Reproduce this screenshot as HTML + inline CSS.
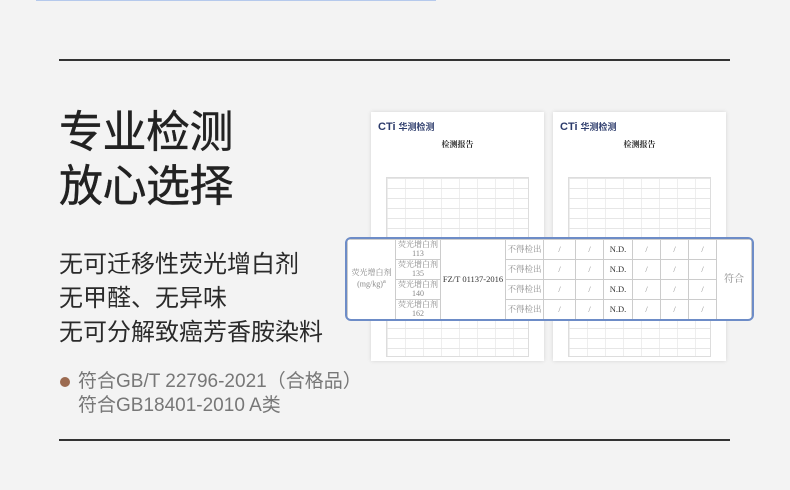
<!DOCTYPE html>
<html><head><meta charset="utf-8"><style>
*{margin:0;padding:0;box-sizing:border-box}
body{width:790px;height:490px;background:#f3f3f3;position:relative;overflow:hidden;font-family:"Liberation Sans","Noto Sans CJK SC",sans-serif}
.line{position:absolute;left:59px;width:671px;height:2px;background:#333}
.t{position:absolute;left:59px;font-size:44px;color:#222;line-height:1;font-weight:normal;letter-spacing:-0.5px;-webkit-text-stroke:0.4px #222}
.f{position:absolute;left:59px;font-size:24px;color:#2a2a2a;line-height:1}
.g{position:absolute;left:78px;font-size:19px;color:#777;line-height:1}
.paper{position:absolute;top:112px;width:173px;height:249px;background:#fff;box-shadow:0 0 4px rgba(0,0,0,.12)}
.logo{position:absolute;left:7px;top:8px;font-size:11px;font-weight:bold;color:#2c3b6b}
.logo span{font-size:9px;margin-left:3px}
.ttl{position:absolute;top:27px;width:100%;text-align:center;font-size:8px;font-weight:bold;color:#222;font-family:"Noto Serif CJK SC",serif}
.grid{position:absolute;left:15px;top:65px;width:143px;height:180px;border:1px solid #ddd;
background-image:linear-gradient(#e6e6e6 1px,transparent 1px),linear-gradient(90deg,#eee 1px,transparent 1px);background-size:18px 10px}
.hl{position:absolute;left:345px;top:237px;width:409px;height:84px;background:#fff;border:2px solid #6d8cc7;border-radius:6px;overflow:hidden;font-family:"Liberation Serif","Noto Serif CJK SC",serif;color:#888;font-size:8.5px}
.hl table{border-collapse:collapse;width:100%;table-layout:fixed}
.hl tr{height:20px}
.hl td{border:1px solid #ccc;text-align:center;line-height:1.2;overflow:hidden;padding:0;white-space:nowrap}
.s{font-size:8px;line-height:1.1!important}
.nd{color:#333}
</style></head><body>
<div style="position:absolute;left:36px;top:0;width:400px;height:1px;background:#b5c9ec"></div>
<div class="line" style="top:59px"></div>
<div class="line" style="top:439px"></div>
<div class="t" style="top:111px">专业检测</div>
<div class="t" style="top:165px">放心选择</div>
<div class="f" style="top:253px">无可迁移性荧光增白剂</div>
<div class="f" style="top:287px">无甲醛、无异味</div>
<div class="f" style="top:321px">无可分解致癌芳香胺染料</div>
<div style="position:absolute;left:60px;top:377px;width:10px;height:10px;border-radius:50%;background:#9b6a50"></div>
<div class="g" style="top:372px">符合GB/T 22796-2021（合格品）</div>
<div class="g" style="top:396px">符合GB18401-2010 A类</div>
<div class="paper" style="left:371px"><div class="logo">CTi<span>华测检测</span></div><div class="ttl">检测报告</div><div class="grid"></div></div>
<div class="paper" style="left:553px"><div class="logo">CTi<span>华测检测</span></div><div class="ttl">检测报告</div><div class="grid"></div></div>
<div class="hl"><table>
<colgroup><col style="width:48px"><col style="width:45px"><col style="width:65px"><col style="width:38px"><col style="width:32px"><col style="width:28px"><col style="width:29px"><col style="width:28px"><col style="width:28px"><col style="width:28px"><col></colgroup>
<tr><td rowspan="4" class="s">荧光增白剂<br>(mg/kg)<sup>a</sup></td><td class="s">荧光增白剂<br>113</td><td rowspan="4" class="nd">FZ/T 01137-2016</td><td>不得检出</td><td>/</td><td>/</td><td class="nd">N.D.</td><td>/</td><td>/</td><td>/</td><td rowspan="4" style="font-size:10px">符合</td></tr>
<tr><td class="s">荧光增白剂<br>135</td><td>不得检出</td><td>/</td><td>/</td><td class="nd">N.D.</td><td>/</td><td>/</td><td>/</td></tr>
<tr><td class="s">荧光增白剂<br>140</td><td>不得检出</td><td>/</td><td>/</td><td class="nd">N.D.</td><td>/</td><td>/</td><td>/</td></tr>
<tr><td class="s">荧光增白剂<br>162</td><td>不得检出</td><td>/</td><td>/</td><td class="nd">N.D.</td><td>/</td><td>/</td><td>/</td></tr>
</table></div>
</body></html>
